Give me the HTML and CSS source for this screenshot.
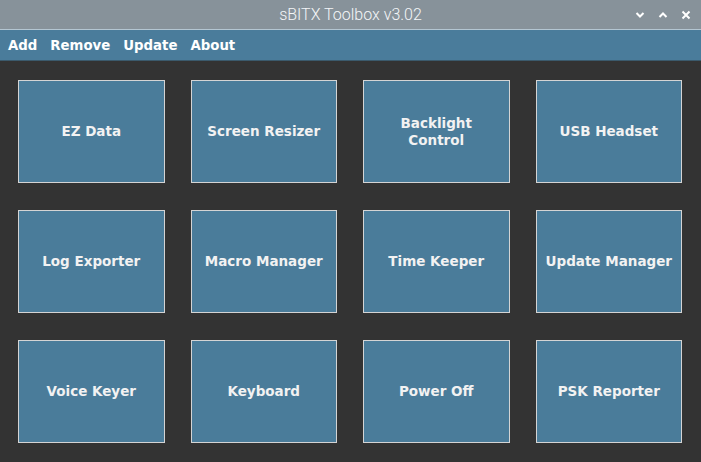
FILE: index.html
```html
<!DOCTYPE html>
<html>
<head>
<meta charset="utf-8">
<link rel="stylesheet" href="styles.css">
</head>
<body>
<div class="window">
  <div class="titlebar">
    <span class="title">sBITX Toolbox v3.02</span>
    <div class="controls">
      <svg class="ctl" viewBox="0 0 10 8" width="10" height="8"><path d="M1.5 2 L5 5.5 L8.5 2" fill="none" stroke="#fff" stroke-width="2"/></svg>
      <svg class="ctl" viewBox="0 0 10 8" width="10" height="8"><path d="M1.5 6 L5 2.5 L8.5 6" fill="none" stroke="#fff" stroke-width="2"/></svg>
      <svg class="ctl" viewBox="0 0 10 10" width="10" height="10"><path d="M1.5 1.5 L8.5 8.5 M8.5 1.5 L1.5 8.5" fill="none" stroke="#fff" stroke-width="2"/></svg>
    </div>
  </div>
  <div class="menubar">
    <span class="menu">Add</span>
    <span class="menu">Remove</span>
    <span class="menu">Update</span>
    <span class="menu">About</span>
  </div>
  <div class="grid">
    <div class="tile">EZ Data</div>
    <div class="tile">Screen Resizer</div>
    <div class="tile">Backlight<br>Control</div>
    <div class="tile">USB Headset</div>
    <div class="tile">Log Exporter</div>
    <div class="tile">Macro Manager</div>
    <div class="tile">Time Keeper</div>
    <div class="tile">Update Manager</div>
    <div class="tile">Voice Keyer</div>
    <div class="tile">Keyboard</div>
    <div class="tile">Power Off</div>
    <div class="tile">PSK Reporter</div>
  </div>
</div>
</body>
</html>
```

FILE: styles.css
```css
html, body {
  margin: 0;
  padding: 0;
  background: #333333;
}
.window {
  width: 701px;
  height: 462px;
  display: flex;
  flex-direction: column;
  overflow: hidden;
}
.titlebar {
  height: 29px;
  background: #87929a;
  border-bottom: 1px solid #b4c6d2;
  position: relative;
  display: flex;
  align-items: center;
  justify-content: center;
  flex-shrink: 0;
}
.title {
  font-family: Roboto, "Liberation Sans", sans-serif;
  font-weight: 300;
  font-size: 16px;
  color: #f4f6f8;
  margin-left: 0;
}
.controls {
  position: absolute;
  right: 10px;
  top: 0;
  height: 29px;
  display: flex;
  align-items: center;
  gap: 13px;
}
.ctl { display: block; }
.menubar {
  height: 31px;
  background: #4a7c9b;
  display: flex;
  align-items: center;
  padding-left: 8px;
  padding-top: 1px;
  gap: 13px;
  flex-shrink: 0;
  box-sizing: border-box;
  border-bottom: 1px solid #3b5a6c;
}
.menu {
  font-family: "DejaVu Sans", sans-serif;
  font-weight: bold;
  font-size: 13.3px;
  color: #ffffff;
}
.grid {
  flex: 1;
  display: grid;
  grid-template-columns: repeat(4, 1fr);
  grid-template-rows: repeat(3, 1fr);
  column-gap: 26px;
  row-gap: 27px;
  padding: 19px 19px 19px 18px;
}
.tile {
  background: #4a7c9a;
  border: 1px solid #d4d4d4;
  display: flex;
  align-items: center;
  justify-content: center;
  text-align: center;
  font-family: "DejaVu Sans", sans-serif;
  font-weight: bold;
  font-size: 13.5px;
  line-height: 17px;
  color: #f2f2f2;
}
```
